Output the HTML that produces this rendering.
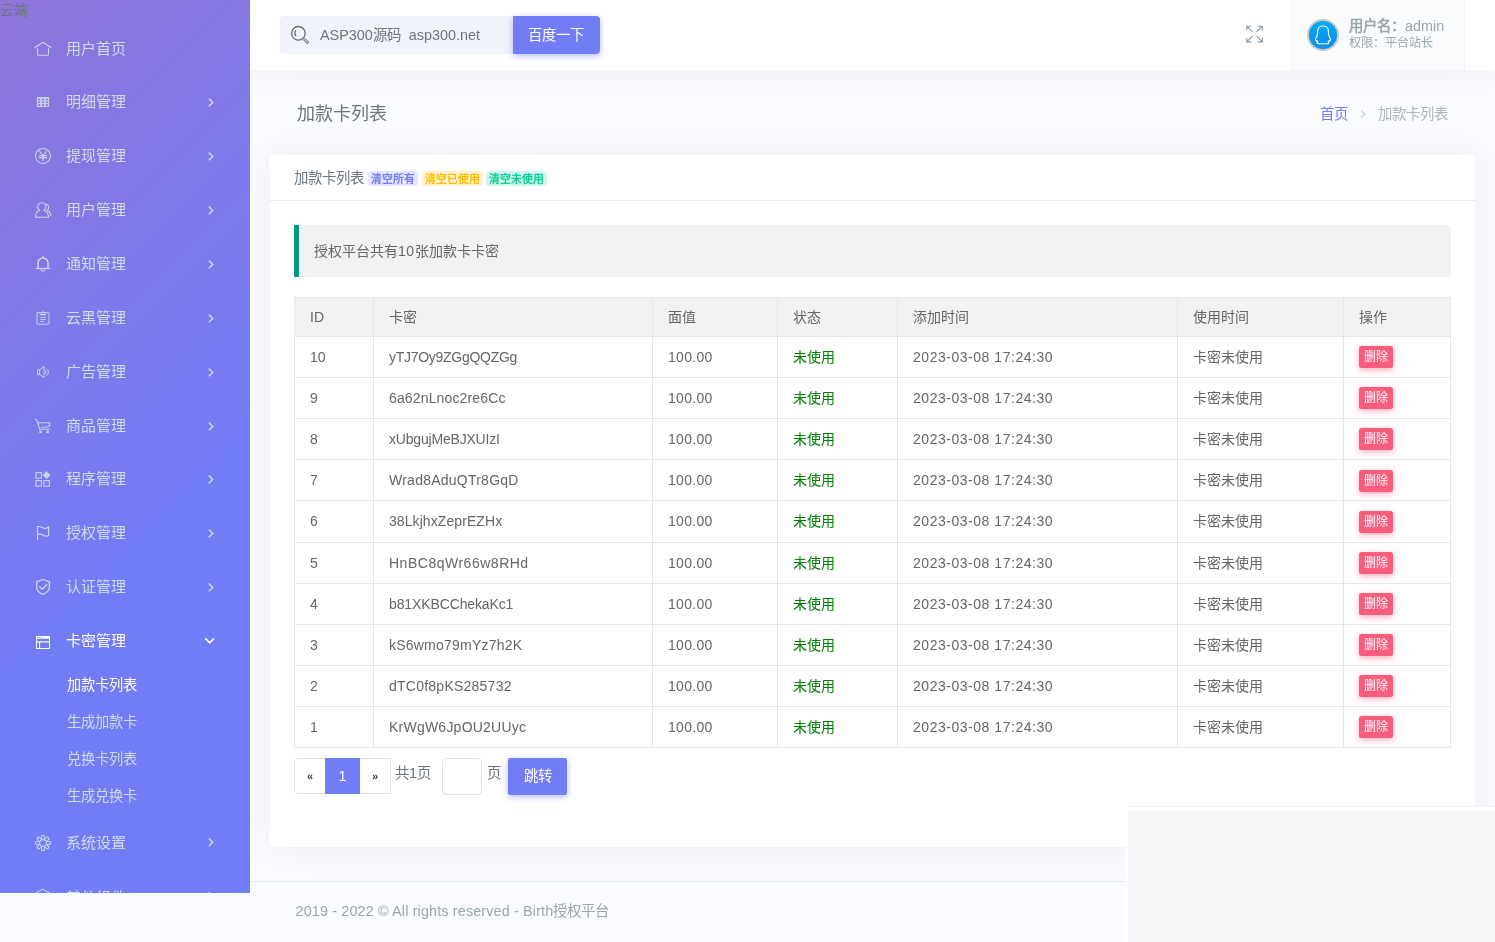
<!DOCTYPE html>
<html lang="zh-CN">
<head>
<meta charset="utf-8">
<title>加款卡列表</title>
<style>
*{box-sizing:border-box;}
html,body{margin:0;padding:0;}
body{width:1495px;height:942px;overflow:hidden;position:relative;background:#fafbfe;will-change:transform;font-family:"Liberation Sans",sans-serif;font-size:14.4px;line-height:1.5;color:#6c757d;}
a{text-decoration:none;color:inherit;}
ul{list-style:none;margin:0;padding:0;}

/* ---------- sidebar ---------- */
#side{position:absolute;left:0;top:0;width:250px;height:893px;overflow:hidden;background:linear-gradient(135deg,#8f75da 0,#727cf5 60%);z-index:5;}
#side .brand{position:absolute;left:0;top:0;font-size:14px;line-height:21px;color:#6c757d;}
#nav a{position:absolute;white-space:nowrap;color:#cedce4;display:block;}
#nav .lnk{left:66px;height:54px;line-height:54px;font-size:15px;}
#nav .sb{left:67.3px;height:37px;line-height:37px;font-size:14.24px;}
#nav a.on{color:#fff;}

/* ---------- topbar ---------- */
#top{position:absolute;left:250px;top:0;width:1245px;height:70px;background:#fff;box-shadow:0 0 35px 0 rgba(154,161,171,.15);z-index:3;}
#search{position:absolute;left:30px;top:16px;width:233px;height:38px;background:#f1f3fa;border-radius:4px 0 0 4px;}
#search .tx{position:absolute;left:40px;top:0;line-height:38px;font-size:14.4px;color:#6c757d;white-space:pre;}
#sbtn{position:absolute;left:263px;top:16px;width:87px;height:38px;background:#727cf5;color:#fff;border-radius:0 4px 4px 0;text-align:center;line-height:39px;font-size:14.4px;padding-right:2px;box-shadow:0 2px 6px 0 rgba(114,124,245,.5);}
#user{position:absolute;left:1041px;top:0;width:174px;height:70px;background:#fafbfd;border:1px solid #f1f3fa;border-width:0 1px;color:#98a6ad;}
#user .nm{position:absolute;left:57px;top:16px;font-weight:bold;font-size:14.4px;line-height:21px;white-space:nowrap;}
#user .nm b{font-weight:normal;}
#user .ps{position:absolute;left:57px;top:34px;font-size:12px;line-height:18px;white-space:nowrap;}

/* ---------- page title ---------- */
#ptitle{position:absolute;left:297px;top:70px;height:88px;line-height:88px;font-size:18px;color:#6c757d;white-space:nowrap;}
#crumb{position:absolute;left:0;top:102px;width:1495px;height:24px;font-size:14.4px;color:#adb5bd;}
#crumb a,#crumb span{position:absolute;top:0;line-height:24px;white-space:nowrap;}
#crumb a{color:#727cf5;}

/* ---------- card ---------- */
#card{position:absolute;left:270px;top:155px;width:1205px;height:692px;background:#fff;border-radius:4px;box-shadow:0 0 35px 0 rgba(154,161,171,.15);}
#chead{position:absolute;left:0;top:0;width:100%;height:46px;border-bottom:1px solid #e7ebf0;padding:0 24px;line-height:46px;white-space:nowrap;}
.bdg{display:inline-block;font-size:10.8px;font-weight:bold;height:14.7px;line-height:16px;overflow:hidden;padding:0;text-align:center;letter-spacing:-0.2px;border-radius:4px;vertical-align:baseline;position:relative;top:2.8px;}
.b1{width:49.8px;color:#727cf5;background:rgba(114,124,245,.18);}
.b2{width:60.6px;margin-left:0.4px;color:#ffbc00;background:rgba(255,188,0,.18);}
.b3{width:60.4px;margin-left:-0.6px;color:#0acf97;background:rgba(10,207,151,.18);}
#quote i{font-style:normal;letter-spacing:.5px;}
#quote{position:absolute;left:24px;top:70px;width:1157px;height:52px;background:#f2f2f2;border-left:5px solid #009688;border-radius:0 2px 2px 0;padding:15px;line-height:22px;font-size:14px;color:#666;white-space:nowrap;}

/* ---------- table ---------- */
#tbl{position:absolute;left:24px;top:142px;width:1156px;border-collapse:collapse;font-size:14px;color:#666;table-layout:fixed;}
#tbl th,#tbl td{border:1px solid #e6e6e6;padding:0 15px;text-align:left;font-weight:normal;line-height:20px;white-space:nowrap;overflow:hidden;}
#tbl th{background:#f2f2f2;height:39px;}
#tbl td{height:41.11px;}
#tbl .g{color:#008000;}
#tbl .m{letter-spacing:.3px;}
#tbl .d{letter-spacing:.53px;}
.del{display:inline-block;width:34px;height:22px;line-height:22px;background:#fa5c7c;color:#fff;font-size:12px;text-align:center;border-radius:2.5px;box-shadow:0 2px 6px 0 rgba(250,92,124,.5);vertical-align:middle;}

/* ---------- pagination ---------- */
#pg{position:absolute;left:24px;top:603px;height:37px;white-space:nowrap;}
#pg .pb{position:absolute;top:0;height:36px;border:1px solid #dee2e6;background:#fff;text-align:center;line-height:34px;color:#313a46;font-size:14.4px;}
#pg .q{font-size:11px;font-weight:bold;line-height:35px;}
#pg .t{position:absolute;top:0;line-height:31px;font-size:14.4px;color:#6c757d;}

/* ---------- footer ---------- */
#foot{position:absolute;left:250px;top:881px;width:1245px;height:61px;border-top:1px solid #e8ebee;color:#98a6ad;font-size:14.4px;}
#foot span{position:absolute;left:45.5px;top:18px;line-height:22px;white-space:nowrap;}
#foot i{font-style:normal;letter-spacing:.14px;}
#ov{position:absolute;left:1125px;top:806px;width:370px;height:136px;background:#fff;z-index:6;}
#ov b{position:absolute;left:3px;top:0;right:0;height:1px;background:#f3f3f6;}
#ov i{position:absolute;left:3px;top:4px;right:0;bottom:0;background:#f7f7f9;}
</style>
</head>
<body>

<div id="side">
  <div class="brand">云端</div>
  <div id="nav">
    <a class="lnk" style="top:22px">用户首页</a>
    <a class="lnk" style="top:75px">明细管理</a>
    <a class="lnk" style="top:129px">提现管理</a>
    <a class="lnk" style="top:183px">用户管理</a>
    <a class="lnk" style="top:237px">通知管理</a>
    <a class="lnk" style="top:291px">云黑管理</a>
    <a class="lnk" style="top:345px">广告管理</a>
    <a class="lnk" style="top:399px">商品管理</a>
    <a class="lnk" style="top:452px">程序管理</a>
    <a class="lnk" style="top:506px">授权管理</a>
    <a class="lnk" style="top:560px">认证管理</a>
    <a class="lnk on" style="top:614px">卡密管理</a>
    <a class="sb on" style="top:667px">加款卡列表</a>
    <a class="sb" style="top:704px">生成加款卡</a>
    <a class="sb" style="top:741px">兑换卡列表</a>
    <a class="sb" style="top:778px">生成兑换卡</a>
    <a class="lnk" style="top:816px">系统设置</a>
    <a class="lnk" style="top:871px">其他组件</a>
  </div>
<svg id="ics" width="250" height="893" viewBox="0 0 250 893" style="position:absolute;left:0;top:0;">
<g stroke="#cedce4" fill="none" stroke-width="1.05" stroke-linecap="round" stroke-linejoin="round" opacity="0.95">
<path d="M35.2 47.5 L43 42.2 L50.8 47.5"/><path d="M37.5 48.4 V54.3 Q37.5 55.3 38.5 55.3 H47.5 Q48.5 55.3 48.5 54.3 V48.4"/>
<circle cx="42.95" cy="155.95" r="7.5"/><path d="M39.5 151.4 L43 155.5 L46.5 151.4 M39.3 155.6 H46.7 M39.3 157.6 H46.7"/><path d="M43 155.6 V160.7" stroke-width="1.4" stroke-linecap="butt"/>
<path d="M39.7 210.3 A4.1 4.1 0 1 1 43.9 210.3 C46.8 211.3 48.4 214 48.4 217.2 H35.5 C35.5 214 36.9 211.3 39.7 210.3"/><path d="M45.9 204.1 C48.5 204.3 49.7 208.3 47.3 210.4 C49.3 211.3 50.7 213 50.7 215.6"/>
<path d="M38 268.2 V263 A5 5 0 0 1 48 263 V268.2" stroke-width="1.55" stroke-linecap="butt"/><path d="M36.2 268.5 H49.8 M43 256.4 V258" stroke-width="1.2"/><path d="M40.8 269.2 A2.3 2.5 0 0 0 45.2 269.2" stroke-width="1.1"/>
<rect x="37" y="312.7" width="12" height="11.5" rx="0.6" stroke-width="0.95"/><path d="M40.4 314.7 H45.6" stroke-width="1.3"/><path d="M41.6 314.3 L42.1 312.3 A0.95 0.95 0 0 1 43.9 312.3 L44.4 314.3" stroke-width="0.95"/><path d="M40.3 317.5 H45.8 M40.3 319.5 H45.8 M40.3 321.5 H43.8" stroke-width="0.9" stroke-linecap="butt"/>
<path d="M39.9 369.8 H37.5 V374.6 H39.9 M39.9 369.8 L44 366.5 V377.5 L39.9 374.6 Z" stroke-width="0.95"/><path d="M45.7 370.6 Q46.9 372.1 45.7 373.6 M46.7 368.9 Q50.5 372.2 46.7 375.6" stroke-width="0.95"/>
<path d="M35.5 419.6 L36.9 420 L39.7 429.3 H49.5"/><path d="M38 422.8 H49.7 C50 425 49.4 426.4 48.3 426.8 L41.6 427.6"/><circle cx="40.6" cy="431.9" r="0.85" fill="#cedce4"/><circle cx="47.6" cy="431.9" r="0.85" fill="#cedce4"/>
<g stroke-width="1.05" stroke-linejoin="miter"><rect x="35.9" y="472.6" width="5.5" height="5.6"/><rect x="35.9" y="480.6" width="5.5" height="5.6"/><rect x="43.8" y="480.6" width="5.6" height="5.6"/></g><path d="M46.6 471.6 L50.3 475.2 L46.6 478.8 L42.9 475.2 Z" fill="#cedce4" stroke-width="0.5"/>
<path d="M37.5 526.5 V539.7 M37.5 526.7 C41.5 525.6 42.5 528.6 45.5 528.4 C47 528.3 48 527.3 48.6 526.6 V535.4 C47.5 536.2 45.5 536.4 43.5 535.3 C41 534 39.5 533.6 37.5 534.4" stroke-width="1.2"/>
<path d="M43 579.5 L49.4 581.8 V587.5 C49.4 590.5 46.5 592.8 43 594.4 C39.5 592.8 36.7 590.5 36.7 587.5 V581.8 Z M39.5 586.6 L42.3 589.2 L46.9 584.5" stroke-width="1.3"/>
<path d="M41.54 838.22 L41.67 835.82 Q43.00 835.05 44.33 835.82 L44.46 838.22 Q44.72 838.84 45.35 838.59 L45.35 838.59 L47.13 836.98 Q48.62 837.38 49.02 838.87 L47.41 840.65 Q47.16 841.28 47.78 841.54 L47.78 841.54 L50.18 841.67 Q50.95 843.00 50.18 844.33 L47.78 844.46 Q47.16 844.72 47.41 845.35 L47.41 845.35 L49.02 847.13 Q48.62 848.62 47.13 849.02 L45.35 847.41 Q44.72 847.16 44.46 847.78 L44.46 847.78 L44.33 850.18 Q43.00 850.95 41.67 850.18 L41.54 847.78 Q41.28 847.16 40.65 847.41 L40.65 847.41 L38.87 849.02 Q37.38 848.62 36.98 847.13 L38.59 845.35 Q38.84 844.72 38.22 844.46 L38.22 844.46 L35.82 844.33 Q35.05 843.00 35.82 841.67 L38.22 841.54 Q38.84 841.28 38.59 840.65 L38.59 840.65 L36.98 838.87 Q37.38 837.38 38.87 836.98 L40.65 838.59 Q41.28 838.84 41.54 838.22 Z" stroke-width="1.05"/><circle cx="43" cy="843" r="3.4" stroke-width="1.05"/>
<path d="M35 893.6 L42.7 889.1 L50.4 893.6"/>
</g>
<path fill="#cedce4" opacity="0.88" fill-rule="evenodd" d="M36.9 96.9 H49.1 V107 H36.9 Z M37.95 98.7 H40.05 V100.15 H37.95 Z M37.95 101.6 H40.05 V103.05 H37.95 Z M37.95 104.2 H40.05 V106.05 H37.95 Z M41.95 98.7 H44.05 V100.15 H41.95 Z M41.95 101.6 H44.05 V103.05 H41.95 Z M41.95 104.2 H44.05 V106.05 H41.95 Z M45.85 98.7 H47.95 V100.15 H45.85 Z M45.85 101.6 H47.95 V103.05 H45.85 Z M45.85 104.2 H47.95 V106.05 H45.85 Z "/>
<g fill="#fff"><path fill-rule="evenodd" d="M36 636 H50 V649 H36 Z M37 638.8 H49 V641.2 H37 Z M37 642.6 H39.1 V648 H37 Z M40.1 642.6 H49 V648 H40.1 Z"/></g><g fill="#727cf5"><circle cx="37.55" cy="637.4" r="0.5"/><circle cx="39.5" cy="637.4" r="0.5"/><circle cx="41.5" cy="637.4" r="0.5"/></g>
<path transform="translate(202 93.60) scale(0.7333)" d="M8.59,16.58L13.17,12L8.59,7.41L10,6L16,12L10,18L8.59,16.58Z" fill="#cedce4"/>
<path transform="translate(202 147.60) scale(0.7333)" d="M8.59,16.58L13.17,12L8.59,7.41L10,6L16,12L10,18L8.59,16.58Z" fill="#cedce4"/>
<path transform="translate(202 201.60) scale(0.7333)" d="M8.59,16.58L13.17,12L8.59,7.41L10,6L16,12L10,18L8.59,16.58Z" fill="#cedce4"/>
<path transform="translate(202 255.60) scale(0.7333)" d="M8.59,16.58L13.17,12L8.59,7.41L10,6L16,12L10,18L8.59,16.58Z" fill="#cedce4"/>
<path transform="translate(202 309.60) scale(0.7333)" d="M8.59,16.58L13.17,12L8.59,7.41L10,6L16,12L10,18L8.59,16.58Z" fill="#cedce4"/>
<path transform="translate(202 363.60) scale(0.7333)" d="M8.59,16.58L13.17,12L8.59,7.41L10,6L16,12L10,18L8.59,16.58Z" fill="#cedce4"/>
<path transform="translate(202 417.60) scale(0.7333)" d="M8.59,16.58L13.17,12L8.59,7.41L10,6L16,12L10,18L8.59,16.58Z" fill="#cedce4"/>
<path transform="translate(202 470.60) scale(0.7333)" d="M8.59,16.58L13.17,12L8.59,7.41L10,6L16,12L10,18L8.59,16.58Z" fill="#cedce4"/>
<path transform="translate(202 524.60) scale(0.7333)" d="M8.59,16.58L13.17,12L8.59,7.41L10,6L16,12L10,18L8.59,16.58Z" fill="#cedce4"/>
<path transform="translate(202 578.60) scale(0.7333)" d="M8.59,16.58L13.17,12L8.59,7.41L10,6L16,12L10,18L8.59,16.58Z" fill="#cedce4"/>
<path transform="translate(202 833.50) scale(0.7333)" d="M8.59,16.58L13.17,12L8.59,7.41L10,6L16,12L10,18L8.59,16.58Z" fill="#cedce4"/>
<path transform="translate(202 887.40) scale(0.7333)" d="M8.59,16.58L13.17,12L8.59,7.41L10,6L16,12L10,18L8.59,16.58Z" fill="#cedce4"/>
<path d="M205.3 638.4 L209.65 642.75 L214 638.4" fill="none" stroke="#fff" stroke-width="1.6"/>
</svg>
</div>

<div id="top">
  <svg id="tics" width="1245" height="70" viewBox="250 0 1245 70" style="position:absolute;left:0;top:0;z-index:2;">
    <g fill="none" stroke="#656e76" stroke-width="1.3" stroke-linecap="round">
      <circle cx="298.4" cy="33.3" r="6.8"/>
      <path d="M295.7 30.7 Q293.8 33.3 295.7 35.9" stroke-width="1.15"/>
      <rect x="0" y="-1" width="5.6" height="2" rx="1" stroke-width="0.95" transform="translate(304.1 39) rotate(45)"/>
    </g>
    <g fill="none" stroke="#8a98a4" stroke-width="1.15" stroke-linecap="butt">
      <path d="M1252.5 31.7 L1246.9 26.3 M1246.8 30.3 V26.2 H1251.3"/>
      <path d="M1256.6 31.7 L1262.2 26.3 M1257.8 26.2 H1262.3 V30.3"/>
      <path d="M1252.5 36.2 L1246.9 41.6 M1246.8 37.7 V41.8 H1251.3"/>
      <path d="M1256.6 36.2 L1262.2 41.6 M1257.8 41.8 H1262.3 V37.7"/>
    </g>
  </svg>
  <div id="search"><span class="tx">ASP300源码  asp300.net</span></div>
  <div id="sbtn">百度一下</div>
  <div id="user">
    <svg id="av" width="34" height="34" viewBox="1306 18 34 34" style="position:absolute;left:14px;top:18px;">
      <defs><linearGradient id="qq" x1="0" y1="0" x2="0" y2="1"><stop offset="0" stop-color="#00aefa"/><stop offset="1" stop-color="#0e8ae1"/></linearGradient></defs>
      <circle cx="1323" cy="35" r="15" fill="url(#qq)" stroke="#ccc8c5" stroke-width="2"/>
      <path fill="none" stroke="#fff" stroke-width="1.1" stroke-linejoin="round" d="M1323 26 C1319.6 26 1317.8 28.2 1317.7 31 C1317.65 33 1317.6 34.3 1317.1 35.6 C1316.4 37.2 1315.4 38.4 1315.5 39.8 C1315.6 41 1316.3 41.1 1316.9 40.5 L1317.8 41.5 C1317.1 41.9 1316.8 42.5 1317.3 43.1 C1317.7 43.6 1318.4 43.8 1319.1 43.8 H1326.9 C1327.6 43.8 1328.3 43.6 1328.7 43.1 C1329.2 42.5 1328.9 41.9 1328.2 41.5 L1329.1 40.5 C1329.7 41.1 1330.4 41 1330.5 39.8 C1330.6 38.4 1329.6 37.2 1328.9 35.6 C1328.4 34.3 1328.35 33 1328.3 31 C1328.2 28.2 1326.4 26 1323 26 Z"/>
    </svg>
    <span class="nm">用户名：<b>admin</b></span>
    <span class="ps">权限：平台站长</span>
  </div>
</div>

<div id="ptitle">加款卡列表</div>
<div id="crumb"><a style="left:1319.6px">首页</a><span style="left:1378.2px">加款卡列表</span><svg width="16" height="16" viewBox="0 0 24 24" style="position:absolute;left:1354.85px;top:3.85px"><path d="M8.59,16.58L13.17,12L8.59,7.41L10,6L16,12L10,18L8.59,16.58Z" fill="#ced4da"/></svg></div>

<div id="card">
  <div id="chead">加款卡列表 <span class="bdg b1">清空所有</span> <span class="bdg b2">清空已使用</span> <span class="bdg b3">清空未使用</span></div>
  <div id="quote">授权平台共有<i>10</i>张加款卡卡密</div>
  <table id="tbl">
    <colgroup><col style="width:79px"><col style="width:279px"><col style="width:125px"><col style="width:120px"><col style="width:280px"><col style="width:166px"><col style="width:107px"></colgroup>
    <thead><tr><th>ID</th><th>卡密</th><th>面值</th><th>状态</th><th>添加时间</th><th>使用时间</th><th>操作</th></tr></thead>
    <tbody id="tb">
      <tr><td>10</td><td style="letter-spacing:-0.28px">yTJ7Oy9ZGgQQZGg</td><td class="m">100.00</td><td class="g">未使用</td><td class="d">2023-03-08 17:24:30</td><td>卡密未使用</td><td><span class="del">删除</span></td></tr>
      <tr><td>9</td><td style="letter-spacing:0.14px">6a62nLnoc2re6Cc</td><td class="m">100.00</td><td class="g">未使用</td><td class="d">2023-03-08 17:24:30</td><td>卡密未使用</td><td><span class="del">删除</span></td></tr>
      <tr><td>8</td><td style="letter-spacing:-0.19px">xUbgujMeBJXUIzI</td><td class="m">100.00</td><td class="g">未使用</td><td class="d">2023-03-08 17:24:30</td><td>卡密未使用</td><td><span class="del">删除</span></td></tr>
      <tr><td>7</td><td style="letter-spacing:0.24px">Wrad8AduQTr8GqD</td><td class="m">100.00</td><td class="g">未使用</td><td class="d">2023-03-08 17:24:30</td><td>卡密未使用</td><td><span class="del">删除</span></td></tr>
      <tr><td>6</td><td style="letter-spacing:0.08px">38LkjhxZeprEZHx</td><td class="m">100.00</td><td class="g">未使用</td><td class="d">2023-03-08 17:24:30</td><td>卡密未使用</td><td><span class="del">删除</span></td></tr>
      <tr><td>5</td><td style="letter-spacing:0.51px">HnBC8qWr66w8RHd</td><td class="m">100.00</td><td class="g">未使用</td><td class="d">2023-03-08 17:24:30</td><td>卡密未使用</td><td><span class="del">删除</span></td></tr>
      <tr><td>4</td><td style="letter-spacing:-0.12px">b81XKBCChekaKc1</td><td class="m">100.00</td><td class="g">未使用</td><td class="d">2023-03-08 17:24:30</td><td>卡密未使用</td><td><span class="del">删除</span></td></tr>
      <tr><td>3</td><td style="letter-spacing:0.22px">kS6wmo79mYz7h2K</td><td class="m">100.00</td><td class="g">未使用</td><td class="d">2023-03-08 17:24:30</td><td>卡密未使用</td><td><span class="del">删除</span></td></tr>
      <tr><td>2</td><td style="letter-spacing:0.24px">dTC0f8pKS285732</td><td class="m">100.00</td><td class="g">未使用</td><td class="d">2023-03-08 17:24:30</td><td>卡密未使用</td><td><span class="del">删除</span></td></tr>
      <tr><td>1</td><td style="letter-spacing:0.23px">KrWgW6JpOU2UUyc</td><td class="m">100.00</td><td class="g">未使用</td><td class="d">2023-03-08 17:24:30</td><td>卡密未使用</td><td><span class="del">删除</span></td></tr>
    </tbody>
  </table>
  <div id="pg">
    <div class="pb q" style="left:0;width:32px;border-radius:4px 0 0 4px;">«</div>
    <div class="pb" style="left:31px;width:35px;background:#727cf5;border-color:#727cf5;color:#fff;">1</div>
    <div class="pb q" style="left:66px;width:31px;border-left:0;">»</div>
    <span class="t" style="left:101px">共1页</span>
    <div class="pb" style="left:148px;width:40px;height:37px;border-radius:4px;"></div>
    <span class="t" style="left:192.5px">页</span>
    <div class="pb" style="left:214px;width:59px;height:37px;line-height:37px;border:0;background:#727cf5;color:#fff;border-radius:2px;box-shadow:0 2px 6px 0 rgba(114,124,245,.5);">跳转</div>
  </div>
</div>

<div id="foot"><span><i>2019 - 2022 © All rights reserved - Birth</i>授权平台</span></div>
<div id="ov"><b></b><i></i></div>

</body>
</html>
